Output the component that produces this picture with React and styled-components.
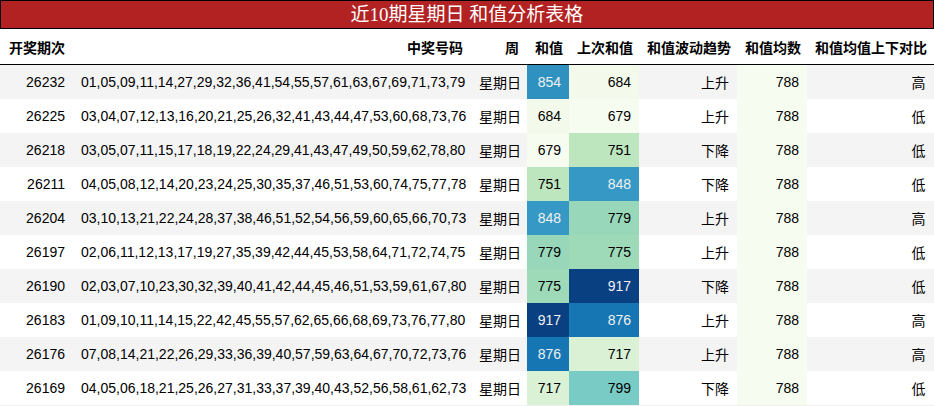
import React from 'react'
import styled, { createGlobalStyle } from 'styled-components'

const GlobalStyle = createGlobalStyle`
  body {
    margin: 0;
    background: #fff;
    font-family: "Liberation Sans", "Noto Sans CJK SC", sans-serif;
  }
`

const rows = [
  ['26232', '01,05,09,11,14,27,29,32,36,41,54,55,57,61,63,67,69,71,73,79', 854, 684, '上升', '高'],
  ['26225', '03,04,07,12,13,16,20,21,25,26,32,41,43,44,47,53,60,68,73,76', 684, 679, '上升', '低'],
  ['26218', '03,05,07,11,15,17,18,19,22,24,29,41,43,47,49,50,59,62,78,80', 679, 751, '下降', '低'],
  ['26211', '04,05,08,12,14,20,23,24,25,30,35,37,46,51,53,60,74,75,77,78', 751, 848, '下降', '低'],
  ['26204', '03,10,13,21,22,24,28,37,38,46,51,52,54,56,59,60,65,66,70,73', 848, 779, '上升', '高'],
  ['26197', '02,06,11,12,13,17,19,27,35,39,42,44,45,53,58,64,71,72,74,75', 779, 775, '上升', '低'],
  ['26190', '02,03,07,10,23,30,32,39,40,41,42,44,45,46,51,53,59,61,67,80', 775, 917, '下降', '低'],
  ['26183', '01,09,10,11,14,15,22,42,45,55,57,62,65,66,68,69,73,76,77,80', 917, 876, '上升', '高'],
  ['26176', '07,08,14,21,22,26,29,33,36,39,40,57,59,63,64,67,70,72,73,76', 876, 717, '上升', '高'],
  ['26169', '04,05,06,18,21,25,26,27,31,33,37,39,40,43,52,56,58,61,62,73', 717, 799, '下降', '低'],
]

const headers = ['开奖期次', '中奖号码', '周', '和值', '上次和值', '和值波动趋势', '和值均数', '和值均值上下对比']
const widths = [73, 398, 56, 42, 70, 98, 70, 127]

// matplotlib GnBu stops
const gnbu = ['#f7fcf0', '#e0f3db', '#ccebc5', '#a8ddb5', '#7bccc4', '#4eb3d3', '#2b8cbe', '#0868ac', '#084081']
  .map(h => [1, 3, 5].map(i => parseInt(h.slice(i, i + 2), 16)))

function shade(t) {
  const p = Math.min(Math.max(t, 0), 1) * (gnbu.length - 1)
  const i = Math.min(Math.floor(p), gnbu.length - 2)
  const f = p - i
  return gnbu[i].map((c, k) => c + (gnbu[i + 1][k] - c) * f)
}

function cellColors(v, min, max) {
  const rgb = shade(max === min ? 0 : (v - min) / (max - min))
  const lin = rgb.map(c => {
    const x = c / 255
    return x <= 0.03928 ? x / 12.92 : Math.pow((x + 0.055) / 1.055, 2.4)
  })
  const lum = 0.2126 * lin[0] + 0.7152 * lin[1] + 0.0722 * lin[2]
  return {
    background: `rgb(${rgb.map(Math.round).join(',')})`,
    color: lum < 0.408 ? '#f1f1f1' : '#000',
  }
}

const sums = rows.map(r => r[2])
const prevs = rows.map(r => r[3])
const range = a => [Math.min(...a), Math.max(...a)]
const [sMin, sMax] = range(sums)
const [pMin, pMax] = range(prevs)

const Page = styled.div`
  width: 934px;
`

const Title = styled.div`
  height: 27px;
  line-height: 27px;
  border: 1px solid #000;
  background: #b22222;
  color: #fff;
  text-align: center;
  font-family: "Liberation Serif", "Noto Sans CJK SC", serif;
  font-size: 19px;
`

const Table = styled.table`
  width: 934px;
  border-collapse: collapse;
  table-layout: fixed;
  font-size: 14px;
  color: #000;
  border-right: 1px solid #f0f0f0;
  border-bottom: 1px solid #f0f0f0;
`

const HeadCell = styled.th`
  height: 35px;
  padding: 0 8px;
  text-align: right;
  font-weight: bold;
  white-space: nowrap;
  border-bottom: 1px solid #000;
`

const Row = styled.tr`
  background: ${p => (p.$odd ? '#f4f4f4' : '#fff')};
`

const Cell = styled.td`
  height: 34px;
  padding: 0 8px;
  text-align: right;
  white-space: nowrap;
`

export default function App() {
  const mean = Math.round(sums.reduce((a, b) => a + b, 0) / sums.length)
  const meanStyle = cellColors(mean, mean, mean)

  return (
    <Page>
      <GlobalStyle />
      <Title>近10期星期日 和值分析表格</Title>
      <Table>
        <colgroup>
          {widths.map((w, i) => <col key={i} style={{ width: w }} />)}
        </colgroup>
        <thead>
          <tr>
            {headers.map(h => <HeadCell key={h}>{h}</HeadCell>)}
          </tr>
        </thead>
        <tbody>
          {rows.map((r, i) => (
            <Row key={r[0]} $odd={i % 2 === 0}>
              <Cell>{r[0]}</Cell>
              <Cell>{r[1]}</Cell>
              <Cell>星期日</Cell>
              <Cell style={cellColors(r[2], sMin, sMax)}>{r[2]}</Cell>
              <Cell style={cellColors(r[3], pMin, pMax)}>{r[3]}</Cell>
              <Cell>{r[4]}</Cell>
              <Cell style={meanStyle}>{mean}</Cell>
              <Cell>{r[5]}</Cell>
            </Row>
          ))}
        </tbody>
      </Table>
    </Page>
  )
}
